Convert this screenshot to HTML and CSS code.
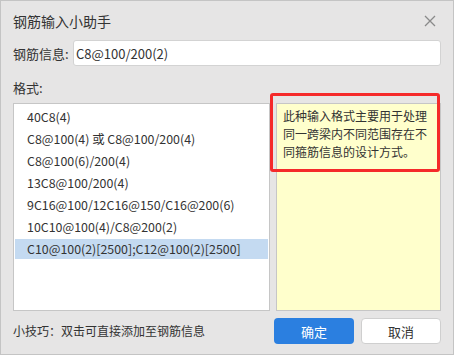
FILE: index.html
```html
<!DOCTYPE html>
<html lang="zh-CN">

<head>
    <meta charset="UTF-8">
    <title>钢筋输入小助手</title>
    <link rel="stylesheet" href="styles.css">
</head>

<body>
    <!-- 对话框 -->
    <div class="dialog">
        <div class="titleBar">
            <div class="title">钢筋输入小助手</div>
            <div class="closeNode">
                <svg width="12" height="12" viewBox="0 0 12 12">
                    <path d="M1 1L11 11M11 1L1 11" stroke="#8a8a8a" stroke-width="1.3" fill="none"/>
                </svg>
            </div>
        </div>
        <!-- 钢筋信息输入 -->
        <div class="infoRow">
            <label class="infoLabel">钢筋信息:</label>
            <input class="infoInput" type="text" value="C8@100/200(2)">
        </div>
        <div class="formatLabel">格式:</div>
        <div class="mainNode">
            <!-- 格式列表 -->
            <ul class="formatList">
                <li>40C8(4)</li>
                <li>C8@100(4) 或 C8@100/200(4)</li>
                <li>C8@100(6)/200(4)</li>
                <li>13C8@100/200(4)</li>
                <li>9C16@100/12C16@150/C16@200(6)</li>
                <li>10C10@100(4)/C8@200(2)</li>
                <li class="active">C10@100(2)[2500];C12@100(2)[2500]</li>
            </ul>
            <!-- 说明 -->
            <div class="descNode">
                <div class="descText">此种输入格式主要用于处理同一跨梁内不同范围存在不同箍筋信息的设计方式。</div>
                <div class="markBox"></div>
            </div>
        </div>
        <div class="bottomNode">
            <div class="tips">小技巧：双击可直接添加至钢筋信息</div>
            <div class="btnGroup">
                <button class="btn okBtn">确定</button>
                <button class="btn cancelBtn">取消</button>
            </div>
        </div>
    </div>
</body>

</html>
```

FILE: styles.css
```css
* {
    margin: 0;
    padding: 0;
    list-style: none;
    box-sizing: border-box;
}

body {
    width: 454px;
    height: 355px;
    font-family: "Noto Sans CJK SC", "Noto Sans", sans-serif;
    color: #333;
    background: #fff;
}

.dialog {
    width: 454px;
    height: 355px;
    padding: 0 12px;
    border: 1px solid #c4c4c4;
    background: #e6e5e5;
    display: flex;
    flex-direction: column;
}

.titleBar {
    height: 39px;
    display: flex;
    align-items: center;
    justify-content: space-between;
}

.title {
    font-size: 14px;
    color: #333;
}

.closeNode {
    width: 12px;
    height: 12px;
    margin-right: 5px;
    display: flex;
    cursor: pointer;
}

.infoRow {
    display: flex;
    align-items: center;
    height: 26px;
}

.infoLabel {
    width: 60px;
    font-size: 13px;
}

.infoInput {
    flex: 1;
    height: 26px;
    border: 1px solid #d3d3d3;
    border-radius: 3px;
    padding: 0 2px;
    font-family: "Noto Sans CJK SC", "Noto Sans", sans-serif;
    font-size: 13px;
    color: #333;
    outline: none;
}

.formatLabel {
    height: 37px;
    line-height: 16px;
    padding-top: 14px;
    font-size: 13px;
}

.mainNode {
    display: grid;
    grid-template-columns: 257px 1fr;
    gap: 6px;
    height: 208px;
}

.formatList {
    border: 1px solid #c6c6c6;
    background: #fff;
    padding: 1px;
}

.formatList li {
    height: 20px;
    line-height: 20px;
    margin-top: 2px;
    padding-left: 12px;
    font-size: 12.4px;
    white-space: nowrap;
}

.formatList .active {
    background: #c4daf1;
}

.descNode {
    position: relative;
    border: 1px solid #c6c6c6;
    background: #ffffcc;
    padding: 3px 6px;
}

.descText {
    font-size: 12px;
    line-height: 18px;
    color: #333;
}

/* 红色标注框 */
.markBox {
    position: absolute;
    left: -7px;
    top: -11px;
    width: 170px;
    height: 79px;
    border: 3px solid #f52a2a;
    border-radius: 3px;
}

.bottomNode {
    display: flex;
    align-items: flex-start;
    justify-content: space-between;
    padding-top: 7px;
}

.tips {
    line-height: 26px;
    font-size: 12px;
    color: #333;
}

.btnGroup {
    display: flex;
    gap: 7px;
}

.btn {
    width: 80px;
    height: 26px;
    border-radius: 4px;
    font-family: "Noto Sans CJK SC", sans-serif;
    font-size: 13px;
    cursor: pointer;
}

.okBtn {
    border: none;
    background: #2b7fe0;
    color: #fff;
}

.cancelBtn {
    border: 1px solid #cfcfcf;
    background: #fff;
    color: #333;
}
```
